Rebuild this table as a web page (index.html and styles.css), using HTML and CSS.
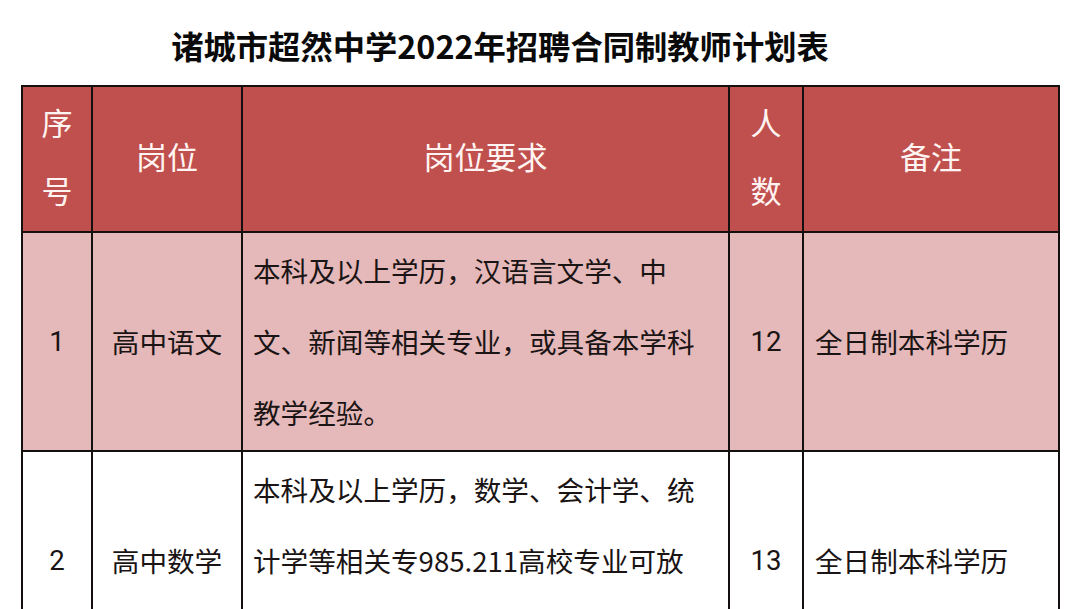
FILE: index.html
```html
<!DOCTYPE html>
<html lang="zh-CN">
<head>
<meta charset="utf-8">
<title>诸城市超然中学2022年招聘合同制教师计划表</title>
<link rel="stylesheet" href="styles.css">
</head>
<body>
<h1 class="title">诸城市超然中学2022年招聘合同制教师计划表</h1>
<div class="wrap">
<table class="plan">
  <colgroup>
    <col class="c-no">
    <col class="c-post">
    <col class="c-req">
    <col class="c-num">
    <col class="c-note">
  </colgroup>
  <thead>
    <tr class="head">
      <th>序<br>号</th>
      <th>岗位</th>
      <th>岗位要求</th>
      <th>人<br>数</th>
      <th>备注</th>
    </tr>
  </thead>
  <tbody>
    <tr class="row pink">
      <td class="center num">1</td>
      <td class="center">高中语文</td>
      <td class="req">本科及以上学历，汉语言文学、中文、新闻等相关专业，或具备本学科教学经验。</td>
      <td class="center num">12</td>
      <td class="note">全日制本科学历</td>
    </tr>
    <tr class="row">
      <td class="center num">2</td>
      <td class="center">高中数学</td>
      <td class="req">本科及以上学历，数学、会计学、统计学等相关专985.211高校专业可放宽。</td>
      <td class="center num">13</td>
      <td class="note">全日制本科学历</td>
    </tr>
  </tbody>
</table>
</div>
</body>
</html>
```
FILE: styles.css
```css
html, body {
  margin: 0;
  padding: 0;
  background: #ffffff;
}
body {
  font-family: "Noto Sans CJK SC", "Noto Sans", sans-serif;
  color: #1a1414;
  overflow: hidden;
}
.title {
  margin: 0 0 20px 0;
  padding: 25px 80px 0 0;
  height: 40px;
  line-height: 40px;
  font-size: 32.3px;
  font-weight: 700;
  text-align: center;
  color: #0a0a0a;
}
.wrap {
  padding-left: 21px;
}
.plan {
  border-collapse: collapse;
  table-layout: fixed;
  width: 1037px;
}
.c-no { width: 70px; }
.c-post { width: 150px; }
.c-req { width: 487px; }
.c-num { width: 74px; }
.c-note { width: 256px; }
.plan th, .plan td {
  border: 2px solid #141010;
  padding: 0;
  vertical-align: middle;
}
.head {
  height: 146px;
  background: #c0504e;
}
.head th {
  color: #fff4f2;
  font-weight: 400;
  font-size: 31px;
  line-height: 68px;
  padding-bottom: 6px;
  text-align: center;
}
.row {
  height: 219px;
  background: #ffffff;
}
.row.pink {
  background: #e5b8b9;
}
.row td {
  font-size: 27.6px;
  line-height: 71px;
}
.num {
  font-family: Roboto, "Noto Sans", sans-serif;
  font-size: 28px;
}
.center {
  text-align: center;
}
.req {
  padding: 0 20px 0 10px !important;
  text-align: left;
}
.note {
  padding-left: 11px !important;
  text-align: left;
}
```
